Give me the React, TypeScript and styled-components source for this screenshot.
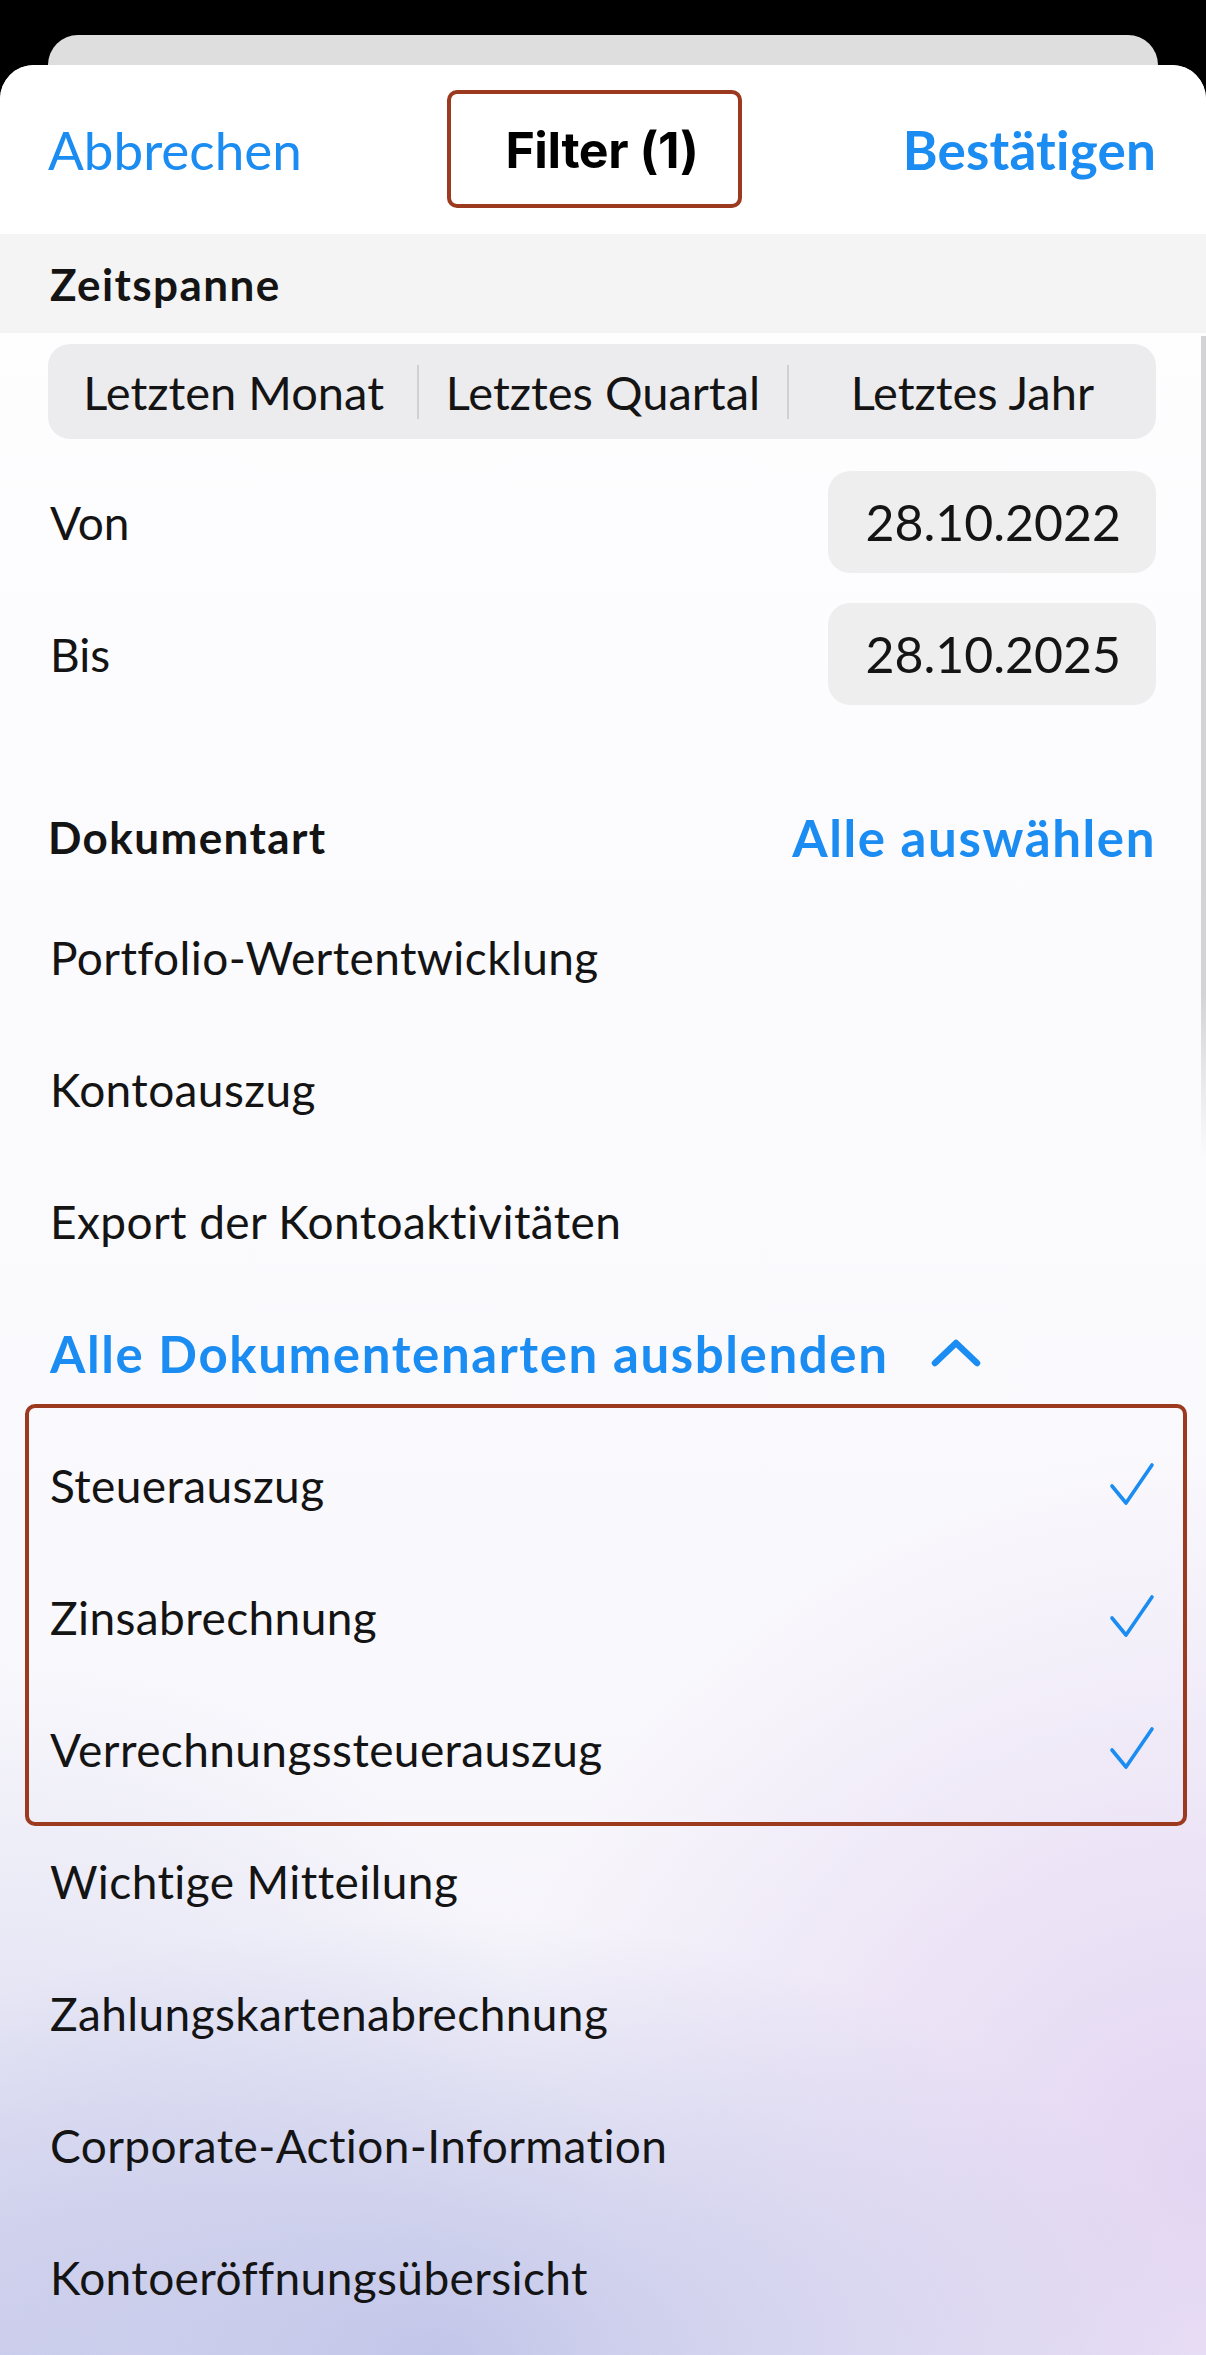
import React from "react";
import styled, { createGlobalStyle } from "styled-components";

const GlobalStyle = createGlobalStyle`
  html, body {
    margin: 0;
    padding: 0;
    background: #000;
  }
  body {
    font-family: "Lato", "Noto Sans", sans-serif;
    -webkit-font-smoothing: antialiased;
  }
`;

const BLUE = "#1b8cf2";
const INK = "#141414";
const MARK = "#9b3a1f";

const Screen = styled.div`
  width: 1206px;
  height: 2355px;
  overflow: hidden;
  background: #000;
  padding-top: 35px;
  box-sizing: border-box;
  position: relative;
`;

const BackCard = styled.div`
  margin: 0 48px;
  height: 60px;
  background: #dedede;
  border-radius: 30px 30px 0 0;
`;

const Sheet = styled.div`
  position: relative;
  margin-top: -30px;
  min-height: 2290px;
  border-radius: 34px 34px 0 0;
  overflow: hidden;
  background:
    radial-gradient(ellipse 760px 440px at 36% 100%, rgba(192, 196, 232, 0.95), rgba(192, 196, 232, 0) 100%),
    radial-gradient(ellipse 720px 720px at 100% 92%, rgba(226, 212, 242, 0.95), rgba(226, 212, 242, 0) 100%),
    radial-gradient(ellipse 620px 700px at 0% 100%, rgba(204, 206, 236, 0.8), rgba(204, 206, 236, 0) 100%),
    linear-gradient(180deg, #ffffff 0%, #fbfafd 40%, #f9f8fc 70%, #f3f1f9 100%);
`;

const Header = styled.header`
  height: 169px;
  background: #fff;
  display: grid;
  grid-template-columns: 1fr auto 1fr;
  align-items: center;
  padding: 0 50px 0 48px;
  box-sizing: border-box;
`;

const HeaderLink = styled.span<{ $bold?: boolean; $end?: boolean }>`
  font-family: "Lato", sans-serif;
  font-size: 53px;
  font-weight: ${(p) => (p.$bold ? 700 : 400)};
  color: ${BLUE};
  justify-self: ${(p) => (p.$end ? "end" : "start")};
  letter-spacing: ${(p) => (p.$bold ? "0.2px" : "0")};
`;

const TitleWrap = styled.div`
  position: relative;
  height: 60px;
  display: flex;
  align-items: center;
  &::after {
    content: "";
    position: absolute;
    left: -58px;
    right: -43px;
    top: -30px;
    bottom: -28px;
    border: 4.5px solid ${MARK};
    border-radius: 10px;
    pointer-events: none;
  }
`;

const Title = styled.h1`
  margin: 0;
  font-family: "Inter", "Liberation Sans", sans-serif;
  font-size: 50px;
  line-height: 60px;
  font-weight: 700;
  color: #000;
  letter-spacing: -0.4px;
`;

const SectionBand = styled.div`
  height: 99px;
  background: #f4f4f4;
  display: flex;
  align-items: center;
  padding-left: 50px;
`;

const SectionTitle = styled.span`
  font-size: 44px;
  font-weight: 700;
  color: ${INK};
  letter-spacing: 1.4px;
`;

const Body = styled.div`
  padding: 0 50px 0 48px;
`;

const Segmented = styled.div`
  margin-top: 11px;
  height: 95px;
  border-radius: 22px;
  background: #ececee;
  display: grid;
  grid-template-columns: 1fr 1fr 1fr;
  align-items: center;
`;

const Segment = styled.div<{ $divider?: boolean }>`
  height: 54px;
  display: flex;
  align-items: center;
  justify-content: center;
  font-size: 47px;
  color: ${INK};
  border-left: 2px solid ${(p) => (p.$divider ? "#d0d0d4" : "transparent")};
`;

const DateRow = styled.div<{ $top: number }>`
  margin-top: ${(p) => p.$top}px;
  height: 102px;
  display: flex;
  align-items: center;
  justify-content: space-between;
`;

const Label = styled.span`
  font-size: 46px;
  color: ${INK};
  padding-left: 2px;
`;

const DateBox = styled.div`
  height: 102px;
  padding: 0 35px 0 37px;
  border-radius: 22px;
  background: #eeeeef;
  display: flex;
  align-items: center;
  font-size: 50px;
  color: ${INK};
`;

const DocHeader = styled.div`
  margin-top: 78px;
  height: 108px;
  display: flex;
  align-items: center;
  justify-content: space-between;
`;

const AccentLink = styled.span`
  font-size: 51px;
  font-weight: 700;
  color: ${BLUE};
  letter-spacing: 1.6px;
`;

const Row = styled.div`
  height: 132px;
  display: flex;
  align-items: center;
  justify-content: space-between;
  font-size: 46px;
  letter-spacing: 0.4px;
  color: ${INK};
  padding-left: 2px;
`;

const ToggleRow = styled(Row)`
  justify-content: flex-start;
  gap: 42px;
`;

const Highlight = styled.div`
  position: relative;
  &::before {
    content: "";
    position: absolute;
    left: -23px;
    right: -31px;
    top: -15px;
    bottom: -11px;
    border: 4.5px solid ${MARK};
    border-radius: 10px;
    pointer-events: none;
  }
`;

const ScrollIndicator = styled.div`
  position: absolute;
  right: 0;
  top: 271px;
  width: 5px;
  height: 820px;
  background: linear-gradient(180deg, #d3d3d6 0%, #d3d3d6 80%, rgba(211, 211, 214, 0) 100%);
`;

const Check = () => (
  <svg width="48" height="48" viewBox="0 0 48 48" fill="none">
    <path
      d="M4 25 L18 42 L44 4"
      stroke={BLUE}
      strokeWidth="3.6"
      strokeLinecap="round"
      strokeLinejoin="round"
    />
  </svg>
);

const ChevronUp = () => (
  <svg width="50" height="30" viewBox="0 0 50 30" fill="none">
    <path
      d="M4 25 L25 5 L46 25"
      stroke={BLUE}
      strokeWidth="6.5"
      strokeLinecap="round"
      strokeLinejoin="round"
    />
  </svg>
);

const topTypes = ["Portfolio-Wertentwicklung", "Kontoauszug", "Export der Kontoaktivitäten"];
const checkedTypes = ["Steuerauszug", "Zinsabrechnung", "Verrechnungssteuerauszug"];
const moreTypes = [
  "Wichtige Mitteilung",
  "Zahlungskartenabrechnung",
  "Corporate-Action-Information",
  "Kontoeröffnungsübersicht",
];

const App = () => (
  <>
    <GlobalStyle />
    <Screen>
      <BackCard />
      <Sheet>
        <Header>
          <HeaderLink>Abbrechen</HeaderLink>
          <TitleWrap>
            <Title>Filter (1)</Title>
          </TitleWrap>
          <HeaderLink $bold $end>
            Bestätigen
          </HeaderLink>
        </Header>
        <SectionBand>
          <SectionTitle>Zeitspanne</SectionTitle>
        </SectionBand>
        <Body>
          <Segmented>
            <Segment>Letzten Monat</Segment>
            <Segment $divider>Letztes Quartal</Segment>
            <Segment $divider>Letztes Jahr</Segment>
          </Segmented>
          <DateRow $top={32}>
            <Label>Von</Label>
            <DateBox>28.10.2022</DateBox>
          </DateRow>
          <DateRow $top={30}>
            <Label>Bis</Label>
            <DateBox>28.10.2025</DateBox>
          </DateRow>
          <DocHeader>
            <SectionTitle>Dokumentart</SectionTitle>
            <AccentLink>Alle auswählen</AccentLink>
          </DocHeader>
          {topTypes.map((t) => (
            <Row key={t}>{t}</Row>
          ))}
          <ToggleRow>
            <AccentLink>Alle Dokumentenarten ausblenden</AccentLink>
            <ChevronUp />
          </ToggleRow>
          <Highlight>
            {checkedTypes.map((t) => (
              <Row key={t}>
                {t}
                <Check />
              </Row>
            ))}
          </Highlight>
          {moreTypes.map((t) => (
            <Row key={t}>{t}</Row>
          ))}
        </Body>
        <ScrollIndicator />
      </Sheet>
    </Screen>
  </>
);

export default App;
